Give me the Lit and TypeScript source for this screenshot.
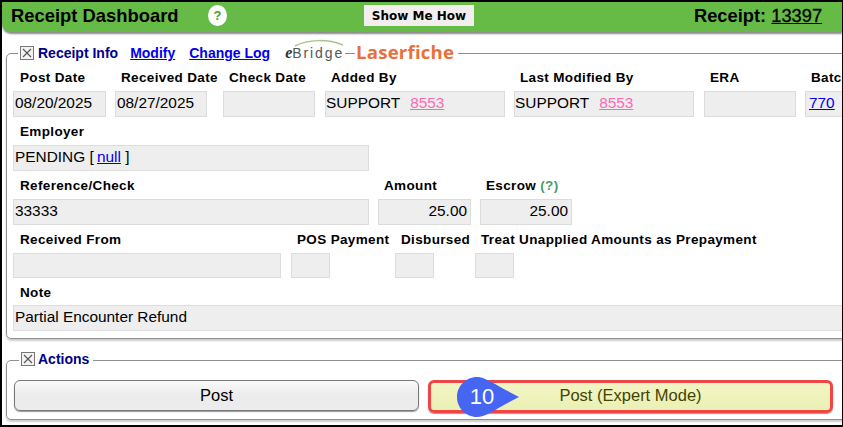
import { LitElement, html, css } from "lit";
import { customElement } from "lit/decorators.js";

const box = html`<svg class="box" width="14" height="14" viewBox="0 0 14 14"><rect x="0.5" y="0.5" width="13" height="13" fill="#f2f2f2" stroke="#777"/><path d="M3 3L11 11M11 3L3 11" stroke="#555" stroke-width="1.1"/></svg>`;

@customElement("app-root")
export class AppRoot extends LitElement {
  static styles = css`
    :host { display: block; width: 843px; height: 427px; overflow: hidden; background: #000; font-family: "Liberation Sans", Arial, sans-serif; color: #000; }
    .page { box-sizing: border-box; width: 840px; height: 423px; margin: 2px 0 0 2px; background: #fff; overflow: hidden; }
    .bar { height: 27px; background: #65bb45; border-radius: 0 0 0 9px; box-shadow: 0 2px 2px #888; display: flex; align-items: center; padding: 0 0 3px 9px; box-sizing: content-box; position: relative; }
    .title { font-size: 18.4px; font-weight: bold; width: 197px; white-space: nowrap; }
    .help { width: 19px; height: 21px; border-radius: 50%; background: #fff; color: #4c9a3c; font-size: 13px; font-weight: bold; display: flex; align-items: center; justify-content: center; margin-right: 137px; }
    .how { background: #f3eeee; width: 110px; height: 21px; display: flex; align-items: center; justify-content: center; font-family: "DejaVu Sans", sans-serif; font-size: 12px; font-weight: bold; margin-right: 220px; white-space: nowrap; }
    .rcpt { font-size: 18.3px; font-weight: bold; white-space: nowrap; }
    .rcpt u { font-weight: normal; -webkit-text-stroke: 0.3px #000; }
    fieldset { margin: 0; padding: 0; border: 1px solid #909090; border-radius: 5px; width: 880px; box-sizing: border-box; box-shadow: 0 2px 2px #ccc; min-width: 0; }
    .info { margin: 12px 0 0 4px; height: 295px; padding: 0 0 0 6px; }
    .actions { margin: 12px 0 0 4px; height: 69px; padding: 0 0 0 7px; }
    legend { margin-left: 5px; padding: 0 4px 0 2px; display: flex; align-items: center; height: 18px; font-size: 14px; font-weight: bold; color: #00008b; white-space: nowrap; box-sizing: border-box; }
    .actions legend { padding-bottom: 2px; }
    .box { flex: none; margin-right: 4px; }
    .actions .box { margin-right: 3px; }
    legend a { color: #0000ee; text-decoration: underline; }
    .mod { margin-left: 12px; }
    .log { margin-left: 14px; }
    .ebridge { margin-left: 15px; font-size: 14px; color: #555; letter-spacing: 1.9px; font-weight: normal; position: relative; }
    .ebridge b { font-style: italic; color: #333; font-family: "Liberation Serif", serif; font-size: 16px; letter-spacing: 0; }
    .arc { position: absolute; left: 9px; top: -5px; }
    .dash { width: 10px; height: 1px; background: #909090; margin: 0 1px; }
    .lf { color: #e8703a; font-size: 18.6px; font-family: "Open Sans", sans-serif; font-weight: bold; letter-spacing: 0.2px; padding-bottom: 4px; }
    .row { display: flex; }
    .f { flex: none; }
    .l { height: 18px; font-size: 13.5px; font-weight: bold; line-height: 18px; padding-left: 6px; white-space: nowrap; letter-spacing: 0.35px; margin-top: 6px; }
    .f:first-child .l { padding-left: 7px; }
    .r1 .l { margin-top: 7px; }
    .v { box-sizing: border-box; height: 26px; margin-top: 4px; background: #eee; border: 1px solid #dcdcdc; font-size: 15.4px; line-height: 22px; padding-left: 1px; white-space: nowrap; overflow: hidden; }
    .v.n { text-align: right; padding-right: 3px; padding-left: 0; }
    .v.who { padding-left: 0; }
    .v.lnk { padding-left: 3px; }
    .note .v { margin-top: 3px; }
    .v a { color: #0000ee; }
    .v a.pink { color: #ff69b4; margin-left: 6px; }
    .v a.nl { margin-left: -1px; }
    .h24 .v { height: 25px; }
    .q { color: #4c9a6a; font-weight: bold; }
    .btns { display: flex; align-items: flex-start; gap: 9px; margin-top: 11px; }
    button { box-sizing: border-box; height: 31px; width: 405px; padding: 0 0 1px; font: 16.5px "Liberation Sans", Arial, sans-serif; color: #000; border: 1px solid #777; border-radius: 6px; background: linear-gradient(#fafafa, #ececec 45%, #ececec); box-shadow: 0 1px 1px #999; }
    button.exp { height: 33px; padding: 0 0 2px; width: 405px; border: 3px solid #f04545; background: linear-gradient(#f3f5c4, #eaf0b4); color: #444400; position: relative; }
    .wrap { position: relative; }
    .pin { position: absolute; left: 29px; top: -3px; width: 62px; height: 40px; }
    .pin span { position: absolute; left: 0; width: 50px; text-align: center; top: 6px; color: #fff; font-size: 22px; line-height: 28px; }
  `;

  f(w: number, gap: number, label: unknown, val: unknown = "", cls = "") {
    return html`<div class="f" style="width:${w}px;margin-right:${gap}px"><div class="l">${label}</div><div class="v ${cls}">${val}</div></div>`;
  }

  render() {
    return html`<div class="page">
      <div class="bar">
        <div class="title">Receipt Dashboard</div>
        <div class="help">?</div>
        <div class="how">Show Me How</div>
        <div class="rcpt">Receipt: <u>13397</u></div>
      </div>
      <fieldset class="info">
        <legend>${box}Receipt Info<a class="mod">Modify</a><a class="log">Change Log</a>
          <span class="ebridge"><svg class="arc" width="50" height="8" viewBox="0 0 50 8"><path d="M1 7C14 0 34 0 49 6" fill="none" stroke="#a9c48a" stroke-width="1.5"/></svg><b>e</b>Bridge</span><span class="dash"></span><span class="lf">Laserfiche</span></legend>
        <div class="row r1">
          ${this.f(93, 9, "Post Date", "08/20/2025")}
          ${this.f(92, 16, "Received Date", "08/27/2025")}
          ${this.f(92, 10, "Check Date")}
          ${this.f(180, 9, "Added By", html`SUPPORT <a class="pink" href="#">8553</a>`, "who")}
          ${this.f(180, 10, "Last Modified By", html`SUPPORT <a class="pink" href="#">8553</a>`, "who")}
          ${this.f(92, 9, "ERA")}
          ${this.f(92, 0, "Batch", html`<a href="#">770</a>`, "lnk")}
        </div>
        <div class="row">${this.f(356, 0, "Employer", html`PENDING [ <a class="nl" href="#">null</a> ]`)}</div>
        <div class="row">
          ${this.f(356, 9, "Reference/Check", "33333")}
          ${this.f(93, 9, "Amount", "25.00", "n")}
          ${this.f(92, 0, html`Escrow <span class="q">(?)</span>`, "25.00", "n")}
        </div>
        <div class="row h24">
          ${this.f(268, 10, "Received From")}
          ${this.f(39, 65, "POS Payment")}
          ${this.f(39, 41, "Disbursed")}
          ${this.f(39, 0, "Treat Unapplied Amounts as Prepayment")}
        </div>
        <div class="row note">${this.f(860, 0, "Note", "Partial Encounter Refund")}</div>
      </fieldset>
      <fieldset class="actions">
        <legend>${box}Actions</legend>
        <div class="btns">
          <button>Post</button>
          <div class="wrap">
            <button class="exp">Post (Expert Mode)</button>
            <div class="pin">
              <svg width="62" height="40" viewBox="0 0 62 40"><path d="M20 0C29 0 38 8 62 20C38 32 29 40 20 40C9 40 0 31 0 20C0 9 9 0 20 0Z" fill="#4565f2"/></svg>
              <span>10</span>
            </div>
          </div>
        </div>
      </fieldset>
    </div>`;
  }
}
